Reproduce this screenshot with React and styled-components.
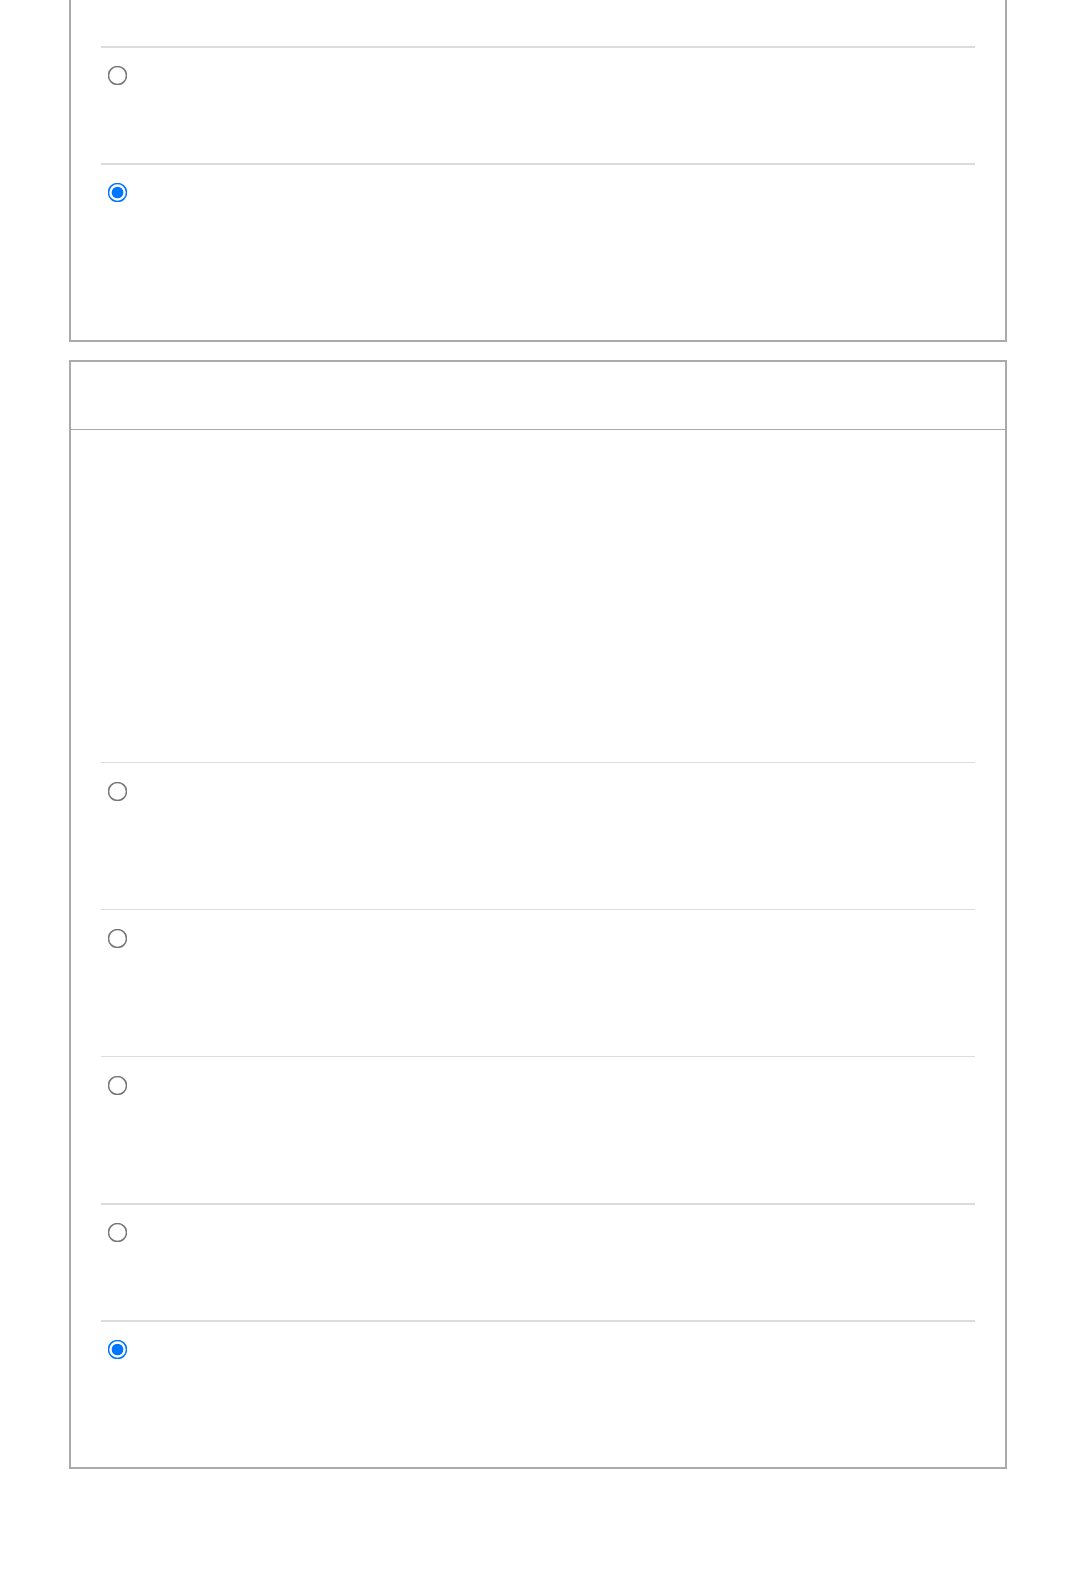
import React from 'react';
import styled, { createGlobalStyle } from 'styled-components';

const GlobalStyle = createGlobalStyle`
    body {
        margin: 0;
        background: #fff;
        font-family: "Liberation Sans", Arial, sans-serif;
    }
`;

// 카드 데이터: 각 행의 높이, 구분선 두께, 선택 여부
const FIRST_ROWS = [
    { id: 0, height: 117, line: 2, checked: false },
    { id: 1, height: 177, line: 2, checked: true },
];

const SECOND_ROWS = [
    { id: 0, height: 147, line: 1, checked: false },
    { id: 1, height: 147, line: 1, checked: false },
    { id: 2, height: 147, line: 1, checked: false },
    { id: 3, height: 117, line: 2, checked: false },
    { id: 4, height: 147, line: 2, checked: true },
];

const OptionRow = ({ row, name }) => (
    <Row $height={row.height} $line={row.line}>
        <Radio type="radio" name={name} defaultChecked={row.checked} />
    </Row>
);

const App = () => {
    return (
        <Page>
            <GlobalStyle />

            {/* 위쪽이 잘린 첫 번째 카드 */}
            <Card $cut>
                <CardBody $top={46}>
                    {FIRST_ROWS.map((row) => (
                        <OptionRow key={row.id} row={row} name="first" />
                    ))}
                </CardBody>
            </Card>

            {/* 두 번째 카드 */}
            <Card>
                <CardHeader />
                <CardBody $top={332}>
                    {SECOND_ROWS.map((row) => (
                        <OptionRow key={row.id} row={row} name="second" />
                    ))}
                </CardBody>
            </Card>
        </Page>
    );
};

const Page = styled.div`
    display: flex;
    flex-direction: column;
    align-items: center;
    gap: 18px;
    padding-bottom: 102px;
`;

const Card = styled.section`
    width: 938px;
    box-sizing: border-box;
    border: 2px solid #aaa;
    border-top: ${(p) => (p.$cut ? 'none' : '2px solid #aaa')};
    background: #fff;
`;

const CardHeader = styled.header`
    height: 67px;
    border-bottom: 1px solid #aaa;
`;

const CardBody = styled.div`
    display: flex;
    flex-direction: column;
    padding: ${(p) => p.$top}px 30px 0;
`;

const Row = styled.div`
    display: flex;
    align-items: flex-start;
    box-sizing: border-box;
    height: ${(p) => p.$height}px;
    border-top: ${(p) => p.$line}px solid #dcdcdc;
    padding-top: ${(p) => 22.5 - p.$line}px;
`;

// 기본 라디오를 1.5배로 키움
const Radio = styled.input`
    width: 13px;
    height: 13px;
    margin: 0 0 0 10px;
    transform: scale(1.5);
`;

export default App;
